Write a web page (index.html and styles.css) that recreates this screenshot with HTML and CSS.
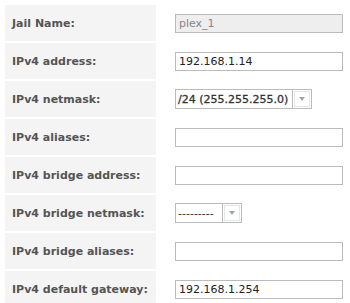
FILE: index.html
```html
<!DOCTYPE html>
<html lang="en">
<head>
    <meta charset="UTF-8">
    <title>Jail</title>
    <link rel="stylesheet" href="styles.css">
</head>
<body>
    <table class="form">
        <tr>
            <th>Jail Name:</th>
            <td><input type="text" class="field" value="plex_1" disabled></td>
        </tr>
        <tr>
            <th>IPv4 address:</th>
            <td><input type="text" class="field" value="192.168.1.14"></td>
        </tr>
        <tr>
            <th>IPv4 netmask:</th>
            <td>
                <div class="select wide">
                    <span class="select-value">/24 (255.255.255.0)</span>
                    <span class="select-btn"><span class="arrow"></span></span>
                </div>
            </td>
        </tr>
        <tr>
            <th>IPv4 aliases:</th>
            <td><input type="text" class="field"></td>
        </tr>
        <tr>
            <th>IPv4 bridge address:</th>
            <td><input type="text" class="field"></td>
        </tr>
        <tr>
            <th>IPv4 bridge netmask:</th>
            <td>
                <div class="select narrow">
                    <span class="select-value">---------</span>
                    <span class="select-btn"><span class="arrow"></span></span>
                </div>
            </td>
        </tr>
        <tr>
            <th>IPv4 bridge aliases:</th>
            <td><input type="text" class="field"></td>
        </tr>
        <tr>
            <th>IPv4 default gateway:</th>
            <td><input type="text" class="field" value="192.168.1.254"></td>
        </tr>
    </table>
</body>
</html>
```

FILE: styles.css
```css
body {
    margin: 3px;
    background: #fff;
    font-family: 'DejaVu Sans', Verdana, sans-serif;
}

.form {
    border-spacing: 2px;
}

.form th {
    width: 144px;
    height: 36px;
    padding: 0 0 0 7px;
    background: #f4f4f4;
    color: #555;
    font-size: 11px;
    font-weight: bold;
    text-align: left;
}

.form td {
    padding: 0 0 0 17px;
    height: 36px;
}

.field {
    display: block;
    box-sizing: border-box;
    width: 168px;
    height: 19px;
    margin: 0;
    padding: 0 3px;
    border: 1px solid #bbb;
    border-radius: 0;
    background: #fff;
    color: #222;
    font-family: inherit;
    font-size: 11px;
}

.field:disabled {
    background: #eee;
    color: #888;
}

.select {
    display: flex;
    height: 20px;
    box-sizing: border-box;
}

.select-value {
    display: flex;
    align-items: center;
    box-sizing: border-box;
    padding: 0 2px;
    border: 1px solid #bbb;
    border-right: none;
    color: #333;
    font-size: 11px;
    white-space: nowrap;
}

.wide .select-value {
    width: 117px;
    -webkit-text-stroke: 0.3px #333;
}

.narrow .select-value {
    width: 47px;
}

.select-btn {
    display: flex;
    align-items: center;
    justify-content: center;
    width: 20px;
    box-sizing: border-box;
    border: 1px solid #bbb;
    background: #fff;
    box-shadow: inset 0 0 0 1px #fff, inset 0 0 0 2px #e6e6e6;
}

.arrow {
    width: 0;
    height: 0;
    border-left: 3px solid transparent;
    border-right: 3px solid transparent;
    border-top: 4px solid #9aa7b8;
}
```
